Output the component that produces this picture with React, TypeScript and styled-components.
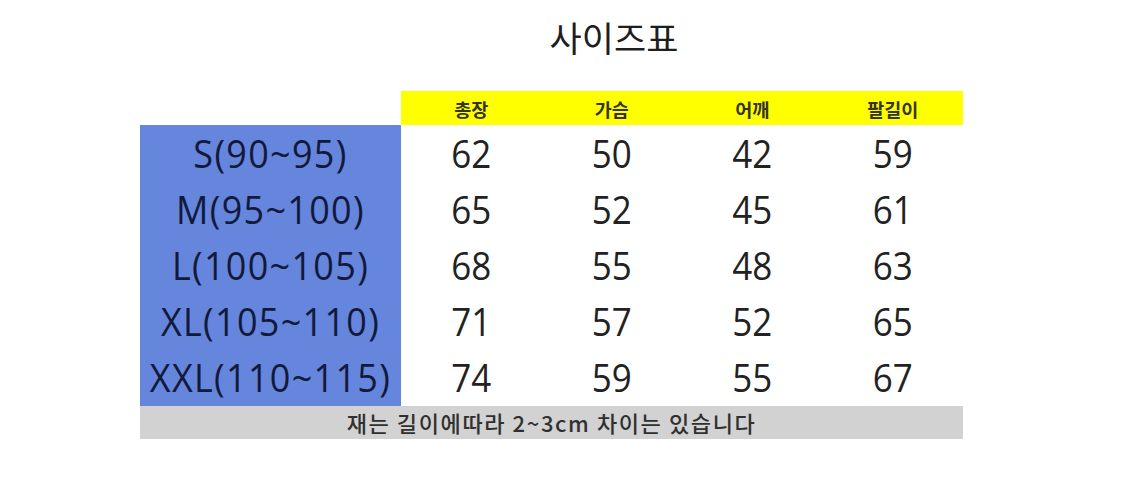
import React from "react";
import styled, { createGlobalStyle } from "styled-components";

const Global = createGlobalStyle`
  html, body { margin: 0; padding: 0; background: #ffffff; }
  body { font-family: "Open Sans", "Noto Sans CJK KR", sans-serif; }
`;

const Page = styled.div`
  width: 1125px;
  height: 487px;
  display: flex;
  flex-direction: column;
  padding: 15px 0 0 140px;
  box-sizing: border-box;
  overflow: hidden;
`;

const Title = styled.h1`
  margin: 0 0 0 404px;
  width: 140px;
  text-align: center;
  font-family: "Noto Sans CJK KR", sans-serif;
  font-weight: 400;
  font-size: 35px;
  line-height: 44px;
  color: #1e1e1e;
  white-space: nowrap;
`;

const Table = styled.div`
  margin-top: 32px;
  width: 823px;
  display: grid;
  grid-template-columns: 261px repeat(4, 140.5px);
  grid-template-rows: 34px repeat(5, 56.2px) 33px;
`;

const Corner = styled.div``;

const HeaderCell = styled.div`
  background: #ffff00;
  display: flex;
  align-items: center;
  justify-content: center;
  font-family: "Noto Sans CJK KR", sans-serif;
  font-weight: 700;
  font-size: 18.5px;
  color: #35351f;
  padding-top: 1px;
`;

const SizeCell = styled.div`
  background: #6685dd;
  display: flex;
  align-items: center;
  justify-content: center;
  white-space: nowrap;
`;

const SizeText = styled.span`
  font-family: "Open Sans", sans-serif;
  font-size: 36px;
  color: #111a3a;
  letter-spacing: 1.3px;
  display: inline-block;
  transform: scaleY(1.08);
`;

const ValueCell = styled.div`
  display: flex;
  align-items: center;
  justify-content: center;
`;

const ValueText = styled.span`
  font-family: "Open Sans", sans-serif;
  font-size: 35px;
  color: #222222;
  display: inline-block;
  transform: scaleY(1.1);
`;

const Note = styled.div`
  grid-column: 1 / -1;
  background: #d2d2d2;
  display: flex;
  align-items: center;
  justify-content: center;
  font-family: "Noto Sans CJK KR", sans-serif;
  font-weight: 500;
  font-size: 22px;
  color: #303030;
  letter-spacing: 1.6px;
  white-space: nowrap;
`;

const headers = ["총장", "가슴", "어깨", "팔길이"];
const rows: [string, number[]][] = [
  ["S(90~95)", [62, 50, 42, 59]],
  ["M(95~100)", [65, 52, 45, 61]],
  ["L(100~105)", [68, 55, 48, 63]],
  ["XL(105~110)", [71, 57, 52, 65]],
  ["XXL(110~115)", [74, 59, 55, 67]],
];

export default function App() {
  return (
    <>
      <Global />
      <Page>
        <Title>사이즈표</Title>
        <Table>
          <Corner />
          {headers.map((h) => (
            <HeaderCell key={h}>{h}</HeaderCell>
          ))}
          {rows.map(([size, vals]) => (
            <React.Fragment key={size}>
              <SizeCell>
                <SizeText>{size}</SizeText>
              </SizeCell>
              {vals.map((v, i) => (
                <ValueCell key={i}>
                  <ValueText>{v}</ValueText>
                </ValueCell>
              ))}
            </React.Fragment>
          ))}
          <Note>재는 길이에따라 2~3cm 차이는 있습니다</Note>
        </Table>
      </Page>
    </>
  );
}
